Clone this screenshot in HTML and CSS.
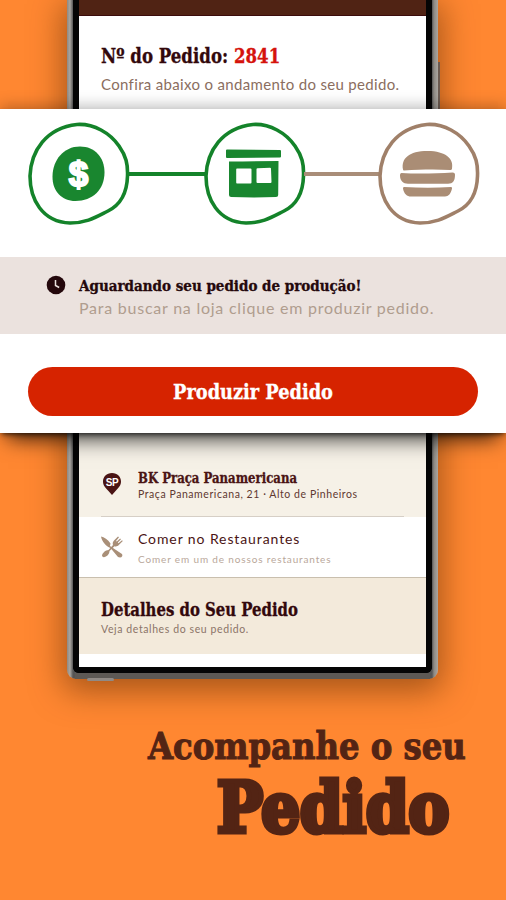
FILE: index.html
```html
<!DOCTYPE html>
<html lang="pt-BR">
    <head>
        <meta charset="UTF-8">
        <title>Acompanhe o seu Pedido</title>
        <link rel="stylesheet" href="styles.css">
    </head>
    <body>
        <div class="stage">
            <div class="phone">
                <div class="side-button"></div>
                <div class="foot-button"></div>
                <div class="screen">
                    <div class="topbar"></div>
                    <div class="order">
                        <h1 class="slab order-title">Nº do Pedido: <span class="number">2841</span></h1>
                        <p class="order-text">Confira abaixo o andamento do seu pedido.</p>
                    </div>
                    <div class="row store">
                        <svg class="pin" viewBox="0 0 20 24" width="20" height="24">
                            <path d="M10 1C4.500 1 1 4.800 1 9.500c0 4 2.600 6.300 5 9L10 23l4-4.500c2.400-2.700 5-5 5-9C19 4.800 15.500 1 10 1z" fill="#4a1414"/>
                            <text x="10" y="14" text-anchor="middle" class="pin-text">SP</text>
                        </svg>
                        <div>
                            <h2 class="slab store-name">BK Praça Panamericana</h2>
                            <p class="store-address">Praça Panamericana, 21 · Alto de Pinheiros</p>
                        </div>
                    </div>
                    <div class="row eat">
                        <svg class="cutlery" viewBox="0 0 24 24" width="24" height="24" fill="#a98f78">
                            <path d="M1 1.500C4 2 8 4.500 10.500 8.500L10 11l1.500 1L22 19c1 1.500 0 3.500-2 3.500L18 22l-7.500-9C6 11 2 7 1 1.500z"/>
                            <path d="M18 1.500l-4 4c-1.500 1.500-1.500 3-1 4.500L8.500 15C5.500 15 2.500 18 2 20.500c.3 1.500 1.500 2 2.500 1.500C7 21.500 9.500 19 9.500 16l5-4.700c1.500.5 3 .2 4.300-1.200l4-4-.8-.8-3.500 3-.7-.7 3.200-3.300-.9-.8-3.300 3.100-.8-.7L19 2.300z"/>
                        </svg>
                        <div>
                            <h2 class="eat-title">Comer no Restaurantes</h2>
                            <p class="eat-text">Comer em um de nossos restaurantes</p>
                        </div>
                    </div>
                    <div class="details">
                        <h2 class="slab details-title">Detalhes do Seu Pedido</h2>
                        <p class="details-text">Veja detalhes do seu pedido.</p>
                    </div>
                </div>
            </div>

            <div class="card">
                <div class="steps">
                    <svg class="step" viewBox="0 0 102 104" width="102" height="104">
                        <path class="ring green" d="M49 2.500C66 1.500 82 11 91 24c7 10 9 18 8.500 30C99 72 92 83 80 89 68 95 59 101 42 101 14 100 2 77 2 54 3 29 18 6 49 2.500z"/>
                        <path d="M52 24.500c15 0 24.500 11 24.500 26 0 17-12 28.500-29 28.500-14 0-23-10-23-24 0-17 11-30.500 27.500-30.500z" fill="#19862f"/>
                        <text x="50.500" y="63.500" text-anchor="middle" class="dollar">$</text>
                    </svg>
                    <div class="link green-link"></div>
                    <svg class="step" viewBox="0 0 102 104" width="102" height="104">
                        <path class="ring green" d="M49 2.500C66 1.500 82 11 91 24c7 10 9 18 8.500 30C99 72 92 83 80 89 68 95 59 101 42 101 14 100 2 77 2 54 3 29 18 6 49 2.500z"/>
                        <path d="M23 27.500l53 .5q1 0 1 1V34.500q0 1-1 1l-53 .5q-1 0-1-1V28.500q0-1 1-1zM25 39.500q25-.3 49.500-.5l-.3 34q0 2-2.200 2-22 .8-44.800 0-2.200 0-2.200-2zM33 46.500q-.8 0-.8 1v13q0 1 .8 1H46.500q1 0 1-1V47.500q0-1-1-1zM53.500 46.200q-1 0-1 1v12.700q0 1 1 1l13 .2q1 0 1-1l-.5-13.400q0-1-1-1z" fill="#19862f" fill-rule="evenodd"/>
                    </svg>
                    <div class="link brown-link"></div>
                    <svg class="step" viewBox="0 0 102 104" width="102" height="104">
                        <path class="ring brown" d="M49 2.500C66 1.500 82 11 91 24c7 10 9 18 8.500 30C99 72 92 83 80 89 68 95 59 101 42 101 14 100 2 77 2 54 3 29 18 6 49 2.500z"/>
                        <g fill="#aa8d75">
                            <path d="M25 47.500c-2-11 6-18.500 24.500-18.500S76 37 74 46.500c0 1-1 1.500-2 1.500-15-1-30-.5-46 .5q-1 0-1-1z"/>
                            <path d="M23.500 51c14 1 34 .7 51-.5 2 0 2.500 1.200 2.500 2.200 0 6-2 9-7 9H30c-5 0-8-3-8-8.500 0-1 .5-2.200 1.500-2.200z"/>
                            <path d="M26 65c16 1 32 1 47 0q1.500 0 1 1.500c-1 5-3.500 8-7 8H33c-4 0-7-2.500-8-8q-.2-1.500 1-1.500z"/>
                        </g>
                    </svg>
                </div>
                <div class="notice">
                    <svg class="clock" viewBox="0 0 20 20" width="20" height="20">
                        <circle cx="10" cy="10" r="9.300" fill="#24080c"/>
                        <path d="M9.500 5v5.500l3.700 2" fill="none" stroke="#ebe2de" stroke-width="1.500"/>
                    </svg>
                    <div>
                        <h2 class="slab notice-title">Aguardando seu pedido de produção!</h2>
                        <p class="notice-text">Para buscar na loja clique em produzir pedido.</p>
                    </div>
                </div>
                <button class="produce"><span class="slab produce-label">Produzir Pedido</span></button>
            </div>

            <div class="slogan">
                <div class="slab slogan-small">Acompanhe o seu</div>
                <div class="slab slogan-big">Pedido</div>
            </div>
        </div>
    </body>
</html>
```

FILE: styles.css
```css
* {
    box-sizing: border-box;
}
body, h1, h2, p {
    margin: 0;
}
body {
    font-family: Lato, "Open Sans", sans-serif;
    background: #ff8731;
    color: #4a1414;
}
.stage {
    position: relative;
    width: 506px;
    height: 900px;
    overflow: hidden;
}
.slab {
    font-family: "DejaVu Serif Condensed", "DejaVu Serif", serif;
    font-stretch: condensed;
    font-weight: bold;
    white-space: nowrap;
    transform-origin: left center;
    -webkit-text-stroke: .3px currentColor;
}
p, .eat-title {
    white-space: nowrap;
}

/* phone */
.phone {
    position: relative;
    width: 371px;
    height: 679px;
    margin-left: 67px;
    padding: 0 6px 6px;
    border-radius: 0 0 9px 9px;
    background: linear-gradient(90deg, #8d8983, #aaa6a0 3px, #555 6px, #555 365px, #8d8983 367px, #aaa6a0);
    box-shadow: 0 8px 32px 4px rgba(95, 45, 5, .55);
}
.phone::after {
    content: "";
    display: block;
    height: 6px;
    margin: 0 2px;
    background: #5d5955;
}
.screen {
    height: 673px;
    border: solid #050505;
    border-width: 0 6px 6px;
    border-radius: 0 0 6px 6px;
    background: #fff;
}
.side-button {
    position: absolute;
    top: 62px;
    right: -2px;
    width: 2px;
    height: 60px;
    background: #6b5a50;
}
.foot-button {
    position: absolute;
    left: 20px;
    bottom: -2px;
    width: 27px;
    height: 3px;
    border-radius: 2px;
    background: #908a85;
}
.topbar {
    height: 16px;
    background: #502314;
    border-bottom: 1px solid #3c0c0c;
}
.order {
    height: 416px;
    padding: 27px 0 0 22px;
}
.order-title {
    font-size: 21px;
    line-height: 26px;
    color: #32080c;
    transform: scaleX(.88);
}
.number {
    color: #d5130c;
}
.order-text {
    margin-top: 5px;
    font-size: 15px;
    line-height: 20px;
    letter-spacing: .33px;
    color: #8b6e60;
}
.row {
    display: flex;
}
.store {
    position: relative;
    height: 85px;
    padding: 37px 0 0 23px;
    gap: 16px;
    background: #f6f1e7;
}
.store::after {
    content: "";
    position: absolute;
    left: 22px;
    right: 22px;
    bottom: 0;
    height: 1px;
    background: #d6cfc6;
}
.pin {
    margin-top: 3px;
}
.pin-text {
    font: bold 10px "Liberation Sans", sans-serif;
    letter-spacing: -.3px;
    fill: #fff;
}
.store-name {
    font-size: 14px;
    line-height: 18px;
    transform: scaleX(.93);
}
.store-address {
    font-size: 10.500px;
    line-height: 14px;
    letter-spacing: .56px;
    color: #5f3830;
}
.eat {
    height: 60px;
    padding: 13px 0 0 21px;
    gap: 14px;
}
.cutlery {
    margin-top: 5px;
}
.eat-title {
    font-size: 14px;
    font-weight: normal;
    line-height: 18px;
    letter-spacing: .9px;
}
.eat-text {
    margin-top: 4px;
    font-size: 10px;
    line-height: 14px;
    letter-spacing: .85px;
    color: #b9a79a;
}
.details {
    height: 77px;
    padding: 21px 0 0 22px;
    border-top: 1px solid #c9bfae;
    background: #f3eadb;
}
.details-title {
    font-size: 18px;
    line-height: 22px;
    color: #32080c;
    transform: scaleX(.92);
}
.details-text {
    margin-top: 1px;
    font-size: 10.500px;
    line-height: 14px;
    letter-spacing: .6px;
    color: #8b7468;
}

/* order status card over the phone */
.card {
    position: absolute;
    top: 109px;
    left: 0;
    width: 506px;
    height: 324px;
    background: #fff;
    box-shadow: 0 14px 20px -8px rgba(0, 0, 0, .75), 0 3px 5px -2px rgba(0, 0, 0, .7), 0 -3px 14px rgba(0, 0, 0, .25);
}
.steps {
    display: flex;
    height: 148px;
    padding: 13px 0 0 28px;
}
.step {
    flex: none;
}
.ring {
    fill: none;
    stroke-width: 3.600;
}
.green {
    stroke: #14832a;
}
.brown {
    stroke: #a08069;
}
.dollar {
    font: bold 35px "Liberation Sans", sans-serif;
    fill: #fff;
    stroke: #fff;
    stroke-width: 2;
}
.link {
    height: 4px;
    margin: 50px -2px 0;
}
.green-link {
    width: 78px;
    background: #14832a;
}
.brown-link {
    width: 76px;
    background: #a98d78;
}
.notice {
    display: flex;
    height: 77px;
    padding: 18px 0 0 46px;
    gap: 13px;
    background: #ebe2de;
}
.notice-title {
    font-size: 15px;
    line-height: 22px;
    color: #24080c;
}
.notice-text {
    font-size: 16px;
    line-height: 22px;
    letter-spacing: .76px;
    color: #b09d8e;
}
.produce {
    display: flex;
    align-items: center;
    justify-content: center;
    width: 450px;
    height: 49px;
    margin: 33px 0 0 28px;
    border: 0;
    border-radius: 25px;
    background: #d62300;
}
.produce-label {
    font-size: 21px;
    color: #fff;
    transform: scaleX(.94);
    transform-origin: center;
}

.slogan {
    color: #532414;
}
.slogan-small {
    margin: 44px 0 0 148px;
    font-size: 38px;
    line-height: 46px;
    transform: scaleX(.945);
    -webkit-text-stroke: 1px #532414;
}
.slogan-big {
    margin: -3px 0 0 217px;
    font-size: 70px;
    line-height: 84px;
    transform: scaleX(.97);
    -webkit-text-stroke: 5px #532414;
}
```
